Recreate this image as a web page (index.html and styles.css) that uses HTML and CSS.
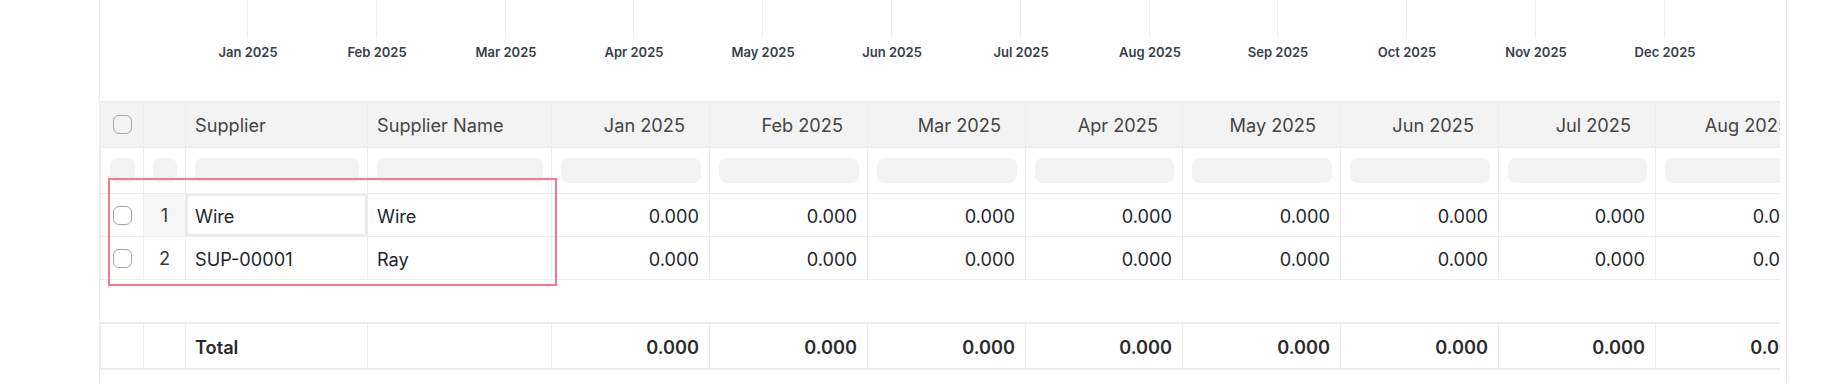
FILE: index.html
```html
<!DOCTYPE html>
<html lang="en">
<head>
    <meta charset="UTF-8">
    <meta name="viewport" content="width=device-width, initial-scale=1.0">
    <title>Supplier Report</title>
    <link rel="stylesheet" href="styles.css">
</head>
<body>
    <div class="report">
        <!-- chart x-axis -->
        <div class="chart">
            <svg width="1680" height="101" viewBox="0 0 1680 101">
                <g class="grid">
                    <line x1="147.5" y1="0" x2="147.5" y2="38"/>
                    <line x1="276.5" y1="0" x2="276.5" y2="38"/>
                    <line x1="405.5" y1="0" x2="405.5" y2="38"/>
                    <line x1="533.5" y1="0" x2="533.5" y2="38"/>
                    <line x1="662.5" y1="0" x2="662.5" y2="38"/>
                    <line x1="791.5" y1="0" x2="791.5" y2="38"/>
                    <line x1="920.5" y1="0" x2="920.5" y2="38"/>
                    <line x1="1049.5" y1="0" x2="1049.5" y2="38"/>
                    <line x1="1177.5" y1="0" x2="1177.5" y2="38"/>
                    <line x1="1306.5" y1="0" x2="1306.5" y2="38"/>
                    <line x1="1435.5" y1="0" x2="1435.5" y2="38"/>
                    <line x1="1564.5" y1="0" x2="1564.5" y2="38"/>
                </g>
                <g class="axis-label">
                    <text x="148" y="57">Jan 2025</text>
                    <text x="277" y="57">Feb 2025</text>
                    <text x="406" y="57">Mar 2025</text>
                    <text x="534" y="57">Apr 2025</text>
                    <text x="663" y="57">May 2025</text>
                    <text x="792" y="57">Jun 2025</text>
                    <text x="921" y="57">Jul 2025</text>
                    <text x="1050" y="57">Aug 2025</text>
                    <text x="1178" y="57">Sep 2025</text>
                    <text x="1307" y="57">Oct 2025</text>
                    <text x="1436" y="57">Nov 2025</text>
                    <text x="1565" y="57">Dec 2025</text>
                </g>
            </svg>
        </div>

        <div class="datatable">
            <div class="dt-row dt-head">
                <div class="dt-cell center"><input type="checkbox" class="check"></div>
                <div class="dt-cell"></div>
                <div class="dt-cell">Supplier</div>
                <div class="dt-cell">Supplier Name</div>
                <div class="dt-cell num">Jan 2025</div>
                <div class="dt-cell num">Feb 2025</div>
                <div class="dt-cell num">Mar 2025</div>
                <div class="dt-cell num">Apr 2025</div>
                <div class="dt-cell num">May 2025</div>
                <div class="dt-cell num">Jun 2025</div>
                <div class="dt-cell num">Jul 2025</div>
                <div class="dt-cell num">Aug 2025</div>
            </div>

            <div class="dt-row dt-filter">
                <div class="dt-cell"><span class="pill"></span></div>
                <div class="dt-cell"><span class="pill"></span></div>
                <div class="dt-cell"><span class="pill"></span></div>
                <div class="dt-cell"><span class="pill"></span></div>
                <div class="dt-cell"><span class="pill"></span></div>
                <div class="dt-cell"><span class="pill"></span></div>
                <div class="dt-cell"><span class="pill"></span></div>
                <div class="dt-cell"><span class="pill"></span></div>
                <div class="dt-cell"><span class="pill"></span></div>
                <div class="dt-cell"><span class="pill"></span></div>
                <div class="dt-cell"><span class="pill"></span></div>
                <div class="dt-cell"><span class="pill"></span></div>
            </div>

            <div class="dt-body">
                <div class="dt-row">
                    <div class="dt-cell center"><input type="checkbox" class="check"></div>
                    <div class="dt-cell center row-index active">1</div>
                    <div class="dt-cell focus">Wire</div>
                    <div class="dt-cell">Wire</div>
                    <div class="dt-cell num">0.000</div>
                    <div class="dt-cell num">0.000</div>
                    <div class="dt-cell num">0.000</div>
                    <div class="dt-cell num">0.000</div>
                    <div class="dt-cell num">0.000</div>
                    <div class="dt-cell num">0.000</div>
                    <div class="dt-cell num">0.000</div>
                    <div class="dt-cell num">0.000</div>
                </div>
                <div class="dt-row">
                    <div class="dt-cell center"><input type="checkbox" class="check"></div>
                    <div class="dt-cell center row-index">2</div>
                    <div class="dt-cell">SUP-00001</div>
                    <div class="dt-cell">Ray</div>
                    <div class="dt-cell num">0.000</div>
                    <div class="dt-cell num">0.000</div>
                    <div class="dt-cell num">0.000</div>
                    <div class="dt-cell num">0.000</div>
                    <div class="dt-cell num">0.000</div>
                    <div class="dt-cell num">0.000</div>
                    <div class="dt-cell num">0.000</div>
                    <div class="dt-cell num">0.000</div>
                </div>
            </div>

            <div class="dt-footer">
                <div class="dt-row">
                    <div class="dt-cell"></div>
                    <div class="dt-cell"></div>
                    <div class="dt-cell">Total</div>
                    <div class="dt-cell"></div>
                    <div class="dt-cell num">0.000</div>
                    <div class="dt-cell num">0.000</div>
                    <div class="dt-cell num">0.000</div>
                    <div class="dt-cell num">0.000</div>
                    <div class="dt-cell num">0.000</div>
                    <div class="dt-cell num">0.000</div>
                    <div class="dt-cell num">0.000</div>
                    <div class="dt-cell num">0.000</div>
                </div>
            </div>
        </div>

        <!-- highlighted selection -->
        <div class="selection-box"></div>
    </div>
</body>
</html>
```

FILE: styles.css
```css
body {
    margin: 0;
    font-family: Inter, 'Liberation Sans', sans-serif;
    color: #1f272e;
    background: #fff;
}

.report {
    position: relative;
    margin-left: 99px;
    width: 1686px;
    min-height: 383px;
    border-left: 1px solid #ebeef0;
    border-right: 1px solid #ebeef0;
}

.chart {
    height: 101px;
}

.chart svg {
    display: block;
}

.grid line {
    stroke: #f0f0f0;
    stroke-width: 1;
}

.axis-label text {
    font-family: Inter, 'Liberation Sans', sans-serif;
    font-size: 13px;
    font-weight: 600;
    fill: #36404a;
    text-anchor: middle;
}

.datatable {
    width: 1680px;
    overflow: hidden;
    font-size: 18.2px;
}

.dt-row {
    display: grid;
    grid-template-columns: 43px 42px 182px 184px 158px 158px 158px 157px 158px 158px 157px 158px;
    width: max-content;
    border-left: 1px solid #ededed;
}

.dt-cell {
    display: flex;
    align-items: center;
    height: 43px;
    padding: 0 9px;
    padding-top: 1px;
    box-sizing: border-box;
    border-right: 1px solid #ededed;
    border-bottom: 1px solid #ededed;
    white-space: nowrap;
    overflow: hidden;
}

.dt-cell.center {
    justify-content: center;
    padding: 0;
}

.dt-cell.num {
    justify-content: flex-end;
    padding-right: 10px;
}

.dt-head {
    border-top: 1px solid #ededed;
}

.dt-head .dt-cell {
    height: 46px;
    background-color: #f3f3f3;
    color: #454545;
}

.dt-head .dt-cell.num {
    padding-right: 24px;
}

.dt-filter .dt-cell {
    height: 46px;
    padding: 0 8px 0 9px;
}

.pill {
    flex: 1;
    height: 25px;
    border-radius: 8px;
    background-color: #f3f3f3;
}

.check {
    appearance: none;
    -webkit-appearance: none;
    width: 19px;
    height: 19px;
    margin: 0;
    border: 1px solid #a7a7a7;
    border-radius: 6px;
    background: transparent;
}

.row-index {
    color: #383838;
}

.row-index.active {
    background-color: #f7f7f7;
}

.dt-cell.focus {
    box-shadow: inset 0 0 0 2px #ebebeb;
    border-right-color: #ebebeb;
}

.dt-body {
    padding-bottom: 42px;
}

.dt-footer .dt-row {
    border-top: 2px solid #ececec;
    border-bottom: 2px solid #ececec;
}

.dt-footer .dt-cell {
    height: 44px;
    border-bottom: none;
    font-weight: 600;
    color: #2b2b2b;
}

.selection-box {
    position: absolute;
    left: 8px;
    top: 178px;
    width: 449px;
    height: 108px;
    box-sizing: border-box;
    border: 2px solid #f27a8c;
    pointer-events: none;
}
```
